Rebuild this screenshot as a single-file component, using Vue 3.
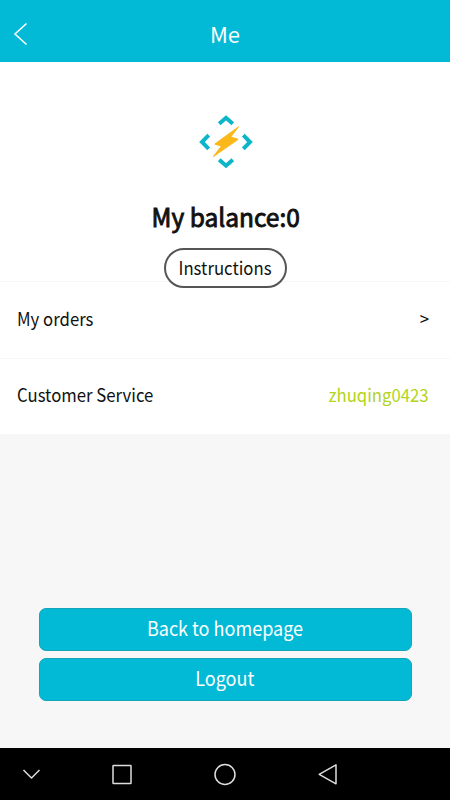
<script setup>
const actions = [
  { label: 'Back to homepage', name: 'home' },
  { label: 'Logout', name: 'logout' },
]
</script>

<template>
  <div class="screen">
    <header class="topbar">
      <button class="back" aria-label="Back">
        <svg width="16" height="26" viewBox="0 0 16 26"><path d="M14.5 2.5 3 13 14.5 23.5" /></svg>
      </button>
      <h1 class="title">Me</h1>
      <span class="spacer"></span>
    </header>

    <section class="profile">
      <svg class="logo" width="56" height="56" viewBox="0 0 56 56">
        <g class="arrows">
          <path d="M21.2 9.8 28 3.8l6.8 6" />
          <path d="M21.2 45.7 28 51.7l6.8-6" />
          <path d="M10.7 21.2 4 28l6.7 6.8" />
          <path d="M45.3 21.2 52 28l-6.7 6.8" />
        </g>
        <path class="bolt" d="M40.2 12.5 16.8 29.4Q16 30.2 17 30.8L22.8 32.3 15 42.3Q14.6 43.4 15.8 42.8L40 26Q40.7 25.2 39.8 24.6L33.4 22.7 40.8 13.2Q41.2 12 40.2 12.5Z" />
      </svg>
      <h2 class="balance">My balance:0</h2>
      <button class="instructions"><span class="text">Instructions</span></button>
    </section>

    <section class="list">
      <div class="row"><span class="text start">My orders</span><span class="text end">&gt;</span></div>
      <div class="row"><span class="text start">Customer Service</span><span class="text end contact">zhuqing0423</span></div>
    </section>

    <div class="actions">
      <button v-for="a in actions" :key="a.name" class="action" :class="a.name">
        <span class="text">{{ a.label }}</span>
      </button>
    </div>

    <nav class="navbar">
      <svg width="450" height="52" viewBox="0 0 450 52">
        <path d="m23.5 22 8 8 8-8" />
        <rect x="113" y="17.5" width="18" height="18" rx=".5" />
        <circle cx="225" cy="26.5" r="10" />
        <path d="M336 16.8v19L319.2 26.3Z" />
      </svg>
    </nav>
  </div>
</template>

<style>
body {
  margin: 0;
}
</style>

<style scoped>
.screen {
  display: flex;
  flex-direction: column;
  width: 450px;
  height: 800px;
  overflow: hidden;
  background: #f7f7f7;
  color: #111;
  font-family: 'Noto Sans CJK SC', 'Noto Sans', sans-serif;
  font-size: 18px;
}
button {
  box-sizing: border-box;
  padding: 0;
  margin: 0;
  border: 0;
  background: none;
  color: inherit;
  font: inherit;
}
.text {
  display: inline-block;
  transform: scaleX(0.93);
}
.start {
  transform-origin: left;
}
.end {
  transform-origin: right;
}
.topbar {
  display: flex;
  align-items: center;
  flex: none;
  box-sizing: border-box;
  height: 62px;
  padding: 6px 12px 0;
  background: #02bad6;
  color: #fff;
}
.back,
.spacer {
  width: 28px;
  height: 26px;
}
.back svg {
  display: block;
  fill: none;
  stroke: #fff;
  stroke-width: 1.6;
}
.title {
  flex: 1;
  margin: 0 0 2px;
  text-align: center;
  font-size: 22px;
  font-weight: 400;
  line-height: 32px;
}
.profile {
  display: flex;
  flex-direction: column;
  align-items: center;
  flex: none;
  height: 219px;
  background: #fff;
}
.logo {
  flex: none;
  margin: 52px 0 0 1px;
}
.arrows {
  fill: none;
  stroke: #0db5c8;
  stroke-width: 4;
}
.bolt {
  fill: #fbb81b;
}
.balance {
  margin: 28px 0 0 1px;
  font-size: 25px;
  font-weight: 400;
  line-height: 36px;
  transform: scaleX(0.98);
  -webkit-text-stroke: 0.9px #111;
}
.instructions {
  position: relative;
  flex: none;
  width: 123px;
  height: 40px;
  margin-top: 14px;
  padding-bottom: 3px;
  border: 2.6px solid #555;
  border-radius: 20px;
  background: #fff;
  line-height: 32px;
}
.list {
  flex: none;
  background: #fff;
}
.row {
  display: flex;
  align-items: center;
  justify-content: space-between;
  box-sizing: border-box;
  height: 76.5px;
  padding: 0 21px 4px 17px;
  border-top: 1px solid #f7f7f7;
}
.contact {
  color: #b2d422;
}
.actions {
  display: flex;
  flex: 1;
  flex-direction: column;
  justify-content: flex-end;
  gap: 7px;
  padding: 0 38.5px 47.5px;
}
.action {
  height: 43px;
  padding-bottom: 3px;
  border: 1px solid #13a5b9;
  border-radius: 7px;
  background: #02bad6;
  color: #fff;
  font-size: 19.4px;
  line-height: 36px;
}
.navbar {
  flex: none;
  height: 52px;
  background: #000;
}
.navbar svg {
  display: block;
  fill: none;
  stroke: #ddd;
  stroke-width: 1.5;
  stroke-linejoin: round;
}
</style>
